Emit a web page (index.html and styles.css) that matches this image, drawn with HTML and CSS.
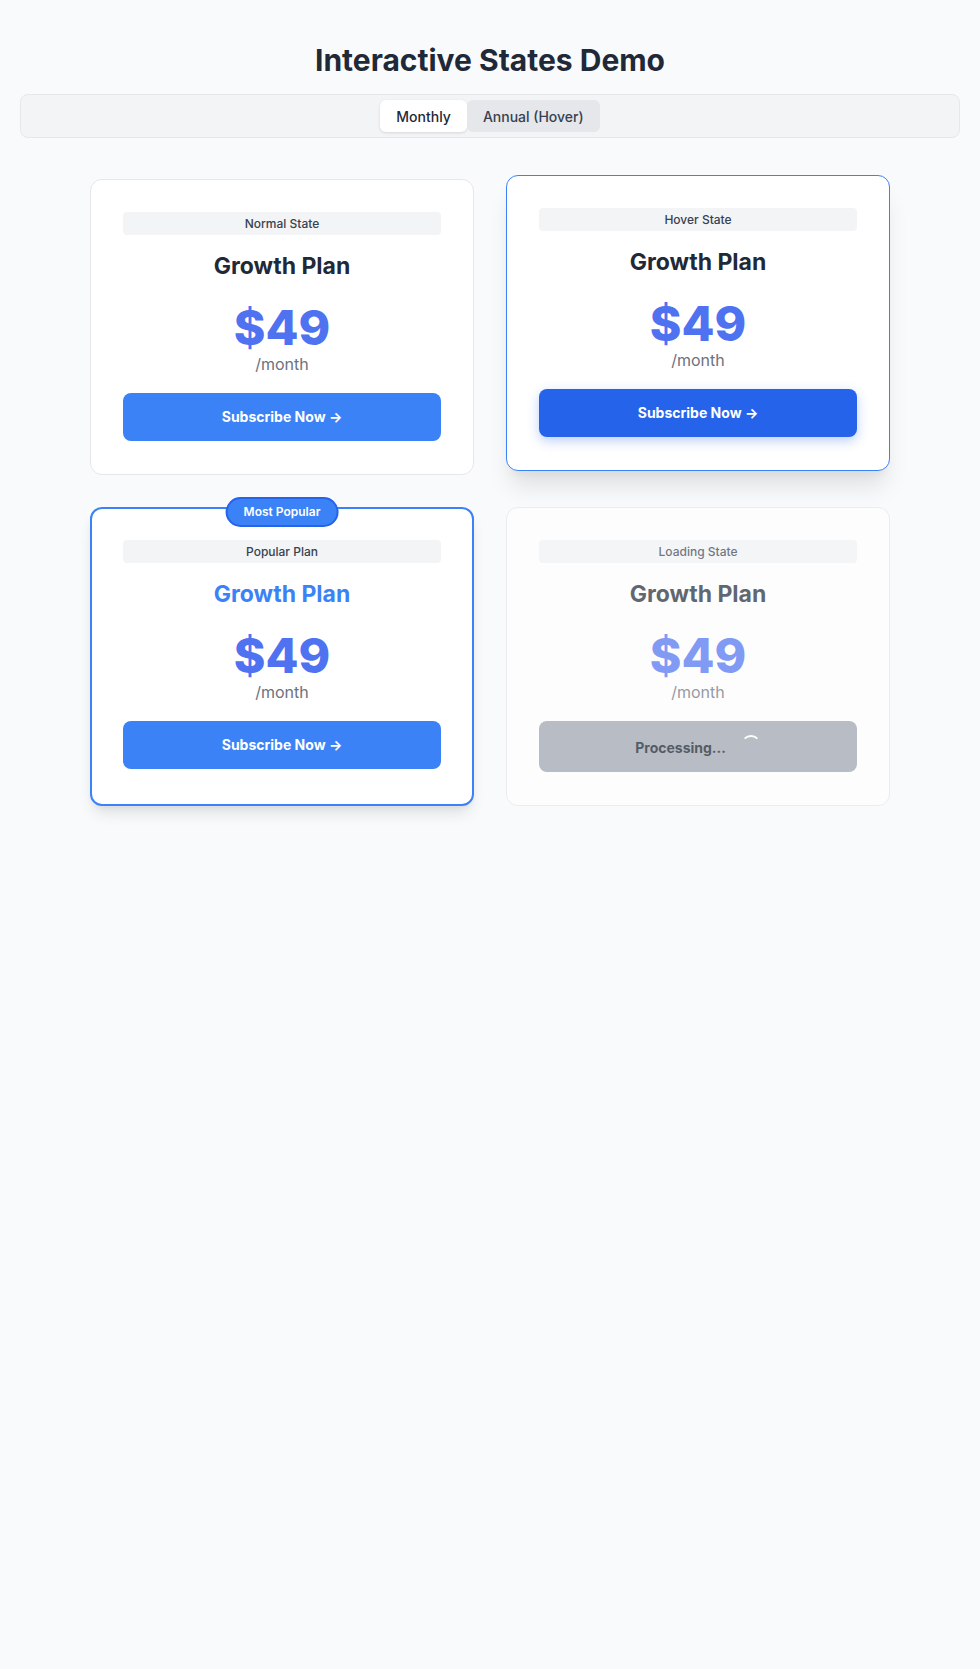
FILE: index.html
```html
<!DOCTYPE html>
<html lang="en">
<head>
<meta charset="utf-8">
<title>Interactive States Demo</title>
<link rel="stylesheet" href="styles.css">
</head>
<body>
<main class="page">
  <h1 class="page-title">Interactive States Demo</h1>
  <div class="toggle-bar">
    <div class="toggle-group">
      <button class="toggle-btn is-active">Monthly</button>
      <button class="toggle-btn is-hover">Annual (Hover)</button>
    </div>
  </div>

  <div class="card-grid">
    <section class="card">
      <div class="state-label">Normal State</div>
      <h2 class="plan-name">Growth Plan</h2>
      <div class="price-block">
        <div class="price">$49</div>
        <div class="period">/month</div>
      </div>
      <button class="cta">Subscribe Now →</button>
    </section>

    <section class="card card-hover">
      <div class="state-label">Hover State</div>
      <h2 class="plan-name">Growth Plan</h2>
      <div class="price-block">
        <div class="price">$49</div>
        <div class="period">/month</div>
      </div>
      <button class="cta cta-hover">Subscribe Now →</button>
    </section>

    <section class="card card-popular">
      <span class="badge">Most Popular</span>
      <div class="state-label">Popular Plan</div>
      <h2 class="plan-name plan-name-accent">Growth Plan</h2>
      <div class="price-block">
        <div class="price">$49</div>
        <div class="period">/month</div>
      </div>
      <button class="cta">Subscribe Now →</button>
    </section>

    <section class="card card-loading">
      <div class="state-label">Loading State</div>
      <h2 class="plan-name">Growth Plan</h2>
      <div class="price-block">
        <div class="price">$49</div>
        <div class="period">/month</div>
      </div>
      <button class="cta cta-loading">Processing... <span class="spinner"></span></button>
    </section>
  </div>
</main>
</body>
</html>
```

FILE: styles.css
```css
* { box-sizing: border-box; }

html, body {
  margin: 0;
  padding: 0;
  background: #f9fafb;
}

body {
  font-family: Inter, "Noto Sans", "Liberation Sans", sans-serif;
  color: #1f2937;
}

.page {
  padding: 20px;
}

.page-title {
  margin: 20px 0 14px;
  font-size: 30px;
  line-height: 40px;
  font-weight: 700;
  text-align: center;
  color: #1f2937;
}

.toggle-bar {
  display: flex;
  justify-content: center;
  padding: 5px;
  background: #f3f4f6;
  border: 1px solid #e5e7eb;
  border-radius: 8px;
}

.toggle-group {
  display: flex;
}

.toggle-btn {
  font-family: inherit;
  font-size: 14px;
  line-height: 21px;
  font-weight: 500;
  padding: 6px 16px 5px;
  border: none;
  border-radius: 6px;
  background: transparent;
  color: #374151;
  cursor: pointer;
}

.toggle-btn.is-active {
  background: #ffffff;
  color: #1f2937;
  box-shadow: 0 1px 3px rgba(0, 0, 0, 0.12);
}

.toggle-btn.is-hover {
  background: #e5e7eb;
}

.card-grid {
  max-width: 800px;
  margin: 41px auto 0;
  display: grid;
  grid-template-columns: 1fr 1fr;
  gap: 32px;
}

.card {
  position: relative;
  background: #ffffff;
  border: 1px solid #e5e7eb;
  border-radius: 12px;
  padding: 32px 32px 33px;
  text-align: center;
}

.card-hover {
  border-color: #3b82f6;
  transform: translateY(-4px);
  box-shadow: 0 20px 25px -5px rgba(0, 0, 0, 0.1), 0 10px 10px -5px rgba(0, 0, 0, 0.04);
}

.card-popular {
  border: 2px solid #3b82f6;
  padding: 31px 31px 32px;
  box-shadow: 0 10px 15px -3px rgba(0, 0, 0, 0.1), 0 4px 6px -2px rgba(0, 0, 0, 0.05);
}

.card-loading {
  opacity: 0.7;
}

.badge {
  position: absolute;
  top: -12px;
  left: 50%;
  transform: translateX(-50%);
  padding: 4px 16px;
  font-size: 12px;
  line-height: 18px;
  font-weight: 600;
  color: #ffffff;
  background: #3b82f6;
  border: 2px solid #2563eb;
  border-radius: 999px;
  white-space: nowrap;
}

.state-label {
  background: #f3f4f6;
  border-radius: 4px;
  padding: 2px 8px;
  font-size: 12px;
  line-height: 19px;
  font-weight: 500;
  color: #374151;
  margin-bottom: 15px;
}

.plan-name {
  margin: 0 0 22px;
  font-size: 23px;
  line-height: 32px;
  font-weight: 700;
  color: #1f2937;
}

.plan-name-accent {
  color: #3b82f6;
}

.price-block {
  margin-bottom: 17px;
}

.price {
  font-size: 48px;
  line-height: 48px;
  font-weight: 800;
  color: #4f72f1;
}

.period {
  font-size: 16px;
  line-height: 24px;
  color: #6b7280;
}

.cta {
  display: block;
  width: 100%;
  font-family: inherit;
  font-size: 14px;
  line-height: 20px;
  font-weight: 700;
  color: #ffffff;
  background: #3b82f6;
  border: none;
  border-radius: 8px;
  padding: 14px 16px;
  cursor: pointer;
}

.cta-hover {
  background: #2563eb;
  box-shadow: 0 4px 12px rgba(37, 99, 235, 0.3);
}

.cta-loading {
  background: #9ca3af;
  color: #111827;
  cursor: not-allowed;
}

.spinner {
  display: inline-block;
  box-sizing: content-box;
  width: 16px;
  height: 16px;
  margin-left: 12px;
  vertical-align: -2px;
  border: 2px solid transparent;
  border-top-color: #ffffff;
  border-radius: 50%;
}
```
